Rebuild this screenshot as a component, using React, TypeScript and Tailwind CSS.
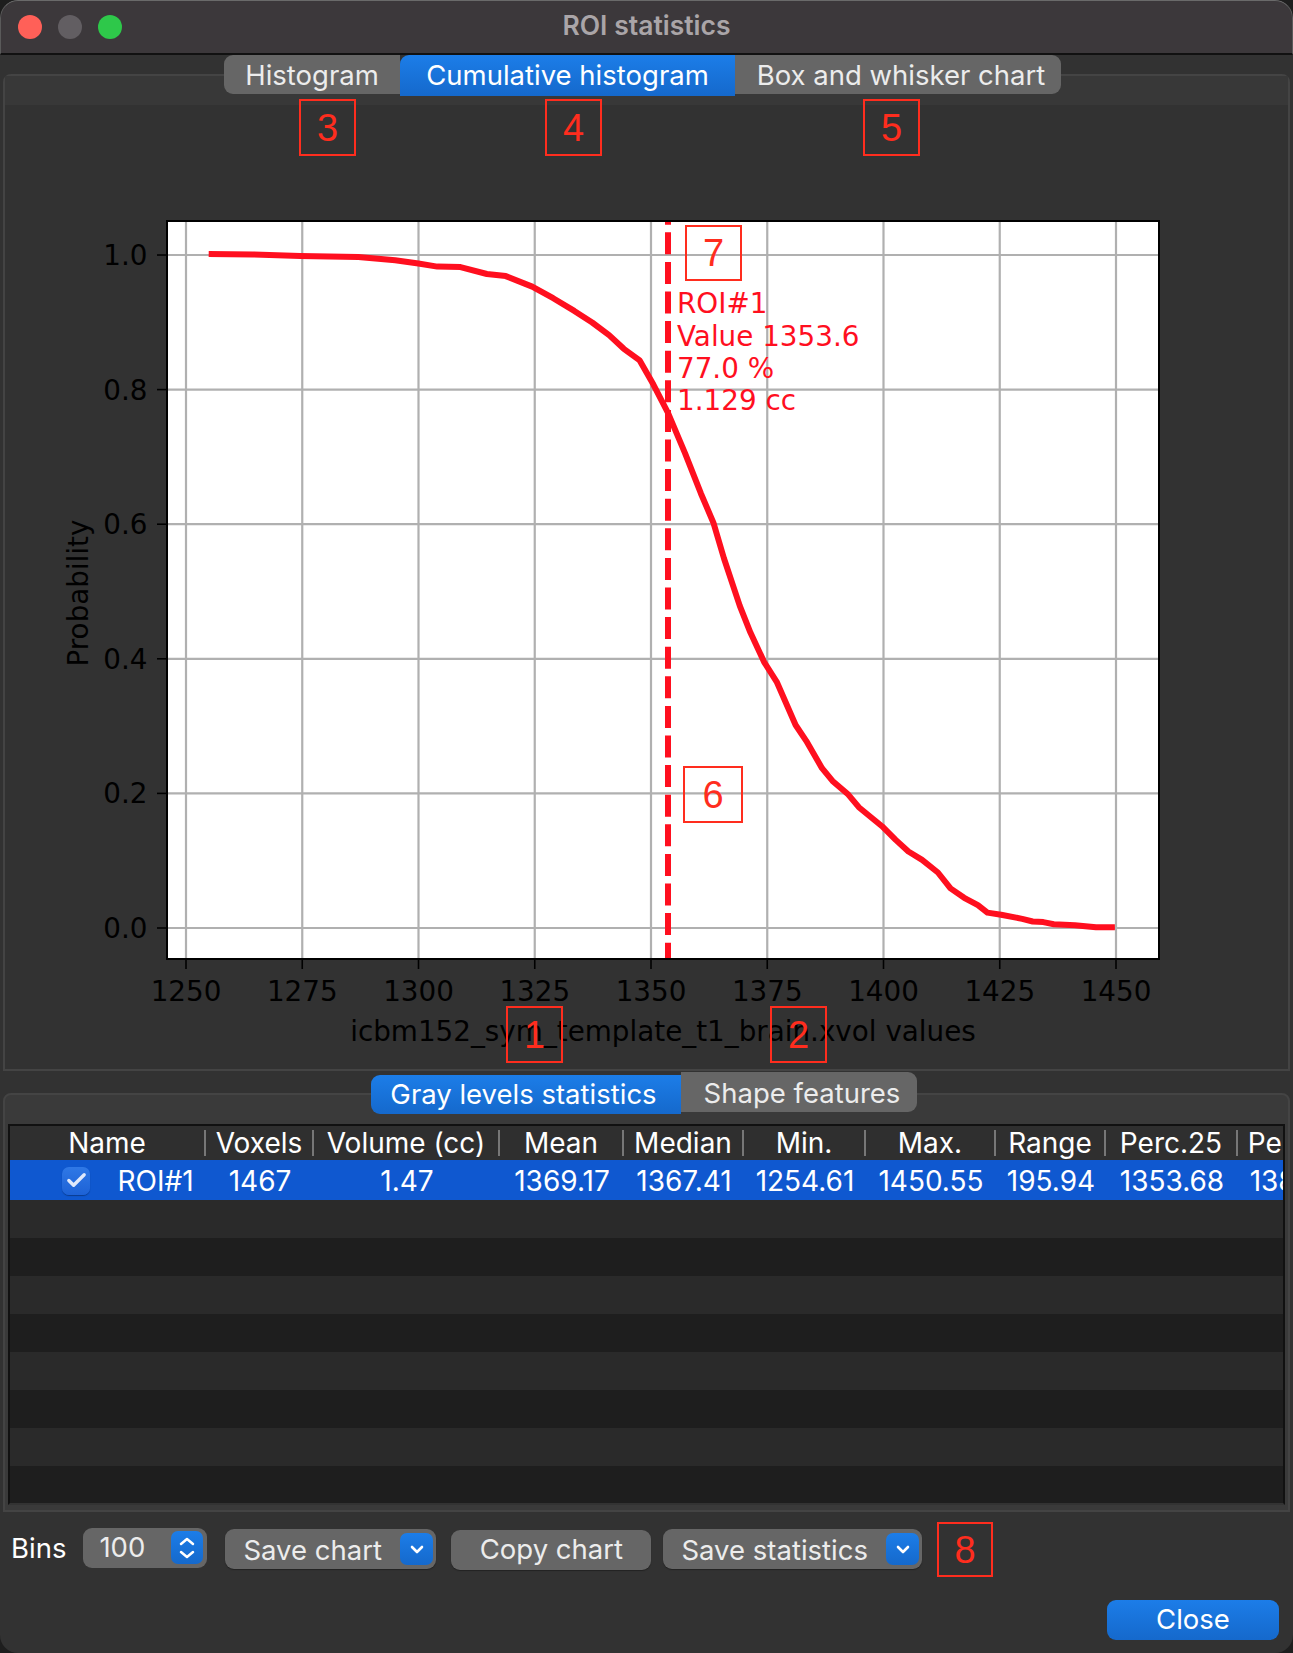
import { Check } from "lucide-react";

// page coordinates: the svg viewBox starts at the page position of the chart area
const curve = [
  [198, 241], [240, 241.5], [285, 243], [340, 244], [375, 247], [397, 250], [415, 253], [437, 253.5],
  [462, 260], [480, 262], [505, 272], [525, 283], [545, 295], [562, 306], [578, 318], [592, 331],
  [607, 342], [620, 365], [634, 392], [650, 430], [665, 468], [677, 496], [687, 530], [702, 575],
  [712, 600], [725, 628], [737, 647], [755, 688], [765, 703], [780, 729], [790, 741], [805, 754],
  [815, 766], [837, 784], [850, 797], [862, 808], [875, 816], [890, 828], [902, 843], [915, 852],
  [928, 859], [937, 866], [950, 868], [970, 872], [980, 874.5], [990, 875], [1000, 877], [1020, 878],
  [1040, 880], [1058, 880],
]
  .map(([x, y]) => `${(x * 1.0538).toFixed(1)},${(y * 1.0538).toFixed(1)}`)
  .join(" ");

const xTicks = [1250, 1275, 1300, 1325, 1350, 1375, 1400, 1425, 1450];
const yTicks = [0, 0.2, 0.4, 0.6, 0.8, 1];

const columns = [
  { name: "Name", width: 196 },
  { name: "Voxels", value: "1467", width: 108 },
  { name: "Volume (cc)", value: "1.47", width: 186 },
  { name: "Mean", value: "1369.17", width: 124 },
  { name: "Median", value: "1367.41", width: 120 },
  { name: "Min.", value: "1254.61", width: 122 },
  { name: "Max.", value: "1450.55", width: 130 },
  { name: "Range", value: "195.94", width: 110 },
  { name: "Perc.25", value: "1353.68", width: 132 },
  { name: "Perc.75", value: "1385.18", width: 120 },
];

const notes = [
  { label: "3", className: "left-[299px] top-[99px] h-[57px] w-[57px]" },
  { label: "4", className: "left-[545px] top-[99px] h-[57px] w-[57px]" },
  { label: "5", className: "left-[863px] top-[99px] h-[57px] w-[57px]" },
  { label: "7", className: "left-[685px] top-[225px] h-[56px] w-[57px]" },
  { label: "6", className: "left-[683px] top-[766px] h-[57px] w-[60px]" },
  { label: "1", className: "left-[506px] top-[1006px] h-[57px] w-[57px]" },
  { label: "2", className: "left-[770px] top-[1006px] h-[57px] w-[57px]" },
  { label: "8", className: "left-[937px] top-[1522px] h-[55px] w-[56px]" },
];

const xPos = (v: number) => 186 + (v - 1250) * 4.65;
const yPos = (p: number) => 928 - p * 673;

function Chart() {
  return (
    <svg viewBox="5 105 1283 960" className="block h-[960px] w-[1283px]">
      <rect x="167" y="221" width="992" height="738" fill="#fff" />
      {xTicks.map((t) => (
        <g key={t}>
          <line x1={xPos(t)} x2={xPos(t)} y1="221" y2="959" stroke="#b0b0b0" strokeWidth="2.2" />
          <line x1={xPos(t)} x2={xPos(t)} y1="959" y2="969" stroke="#000" strokeWidth="1.6" />
          <text x={xPos(t)} y="1001" textAnchor="middle" fontSize="27.8" fontFamily="DejaVu Sans" fill="#000">
            {t}
          </text>
        </g>
      ))}
      {yTicks.map((t) => (
        <g key={t}>
          <line x1="167" x2="1159" y1={yPos(t)} y2={yPos(t)} stroke="#b0b0b0" strokeWidth="2.2" />
          <line x1="157" x2="167" y1={yPos(t)} y2={yPos(t)} stroke="#000" strokeWidth="1.6" />
          <text x="147.5" y={yPos(t) + 10} textAnchor="end" fontSize="27.8" fontFamily="DejaVu Sans" fill="#000">
            {t.toFixed(1)}
          </text>
        </g>
      ))}
      <polyline points={curve} fill="none" stroke="#ff0f1f" strokeWidth="6" strokeLinejoin="round" />
      <line
        x1="668"
        x2="668"
        y1="221"
        y2="959"
        stroke="#ff0f1f"
        strokeWidth="6"
        strokeDasharray="22 7.6"
        strokeDashoffset="18.3"
      />
      <rect x="167" y="221" width="992" height="738" fill="none" stroke="#000" strokeWidth="2" />
      <g fontSize="27.8" fontFamily="DejaVu Sans" fill="#ff0f1f">
        <text x="677" y="313">ROI#1</text>
        <text x="677" y="345.5">Value 1353.6</text>
        <text x="677" y="378">77.0 %</text>
        <text x="677" y="410">1.129 cc</text>
      </g>
      <text x="663" y="1041" textAnchor="middle" fontSize="27.8" fontFamily="DejaVu Sans" fill="#000">
        icbm152_sym_template_t1_brain.xvol values
      </text>
      <text
        transform="translate(88 593) rotate(-90)"
        textAnchor="middle"
        fontSize="27.8"
        fontFamily="DejaVu Sans"
        fill="#000"
      >
        Probability
      </text>
    </svg>
  );
}

function ComboButton({ label, width }: { label: string; width: string }) {
  return (
    <div className={`flex h-10 items-center justify-between rounded-[9px] bg-[#666] pl-[18px] pr-[3px] shadow-[0_1px_1px_#222] ${width}`}>
      <span className="pt-[3px]">{label}</span>
      <span className="flex h-8 w-[33px] items-center justify-center rounded-[7px] bg-gradient-to-b from-[#1c7de8] to-[#1569cc] text-white">
        <svg viewBox="0 0 20 20" className="h-5 w-5" fill="none" stroke="currentColor" strokeWidth="2.6" strokeLinecap="round" strokeLinejoin="round">
          <path d="M5 8l5 5 5-5" />
        </svg>
      </span>
    </div>
  );
}

export default function App() {
  return (
    <div className="h-[1653px] w-[1293px] bg-[#1e1e1e]">
      <div
        className="relative flex h-[1653px] w-[1293px] flex-col overflow-hidden rounded-[18px] bg-[#323232] text-[27.5px] leading-none text-[#ececec]"
        style={{ fontFamily: "Inter, sans-serif" }}
      >
        <div className="relative flex h-[55px] shrink-0 items-center justify-center rounded-t-[18px] border-x border-t border-b-2 border-x-[#5a5a5a] border-t-[#6a6a6a] border-b-[#111] bg-[#3c383b]">
          <div className="absolute left-[17px] flex gap-[16px]">
            <span className="h-6 w-6 rounded-full bg-[#ff6058]" />
            <span className="h-6 w-6 rounded-full bg-[#625e62]" />
            <span className="h-6 w-6 rounded-full bg-[#2ec84a]" />
          </div>
          <span className="pb-[4px] text-[26.5px] font-semibold text-[#aaa5a8]">ROI statistics</span>
        </div>

        <div className="relative z-10 flex h-[39px] shrink-0 justify-center pr-[8px]">
          <div className="flex h-[39px] w-[176px] items-center justify-center rounded-l-[9px] bg-[#666] pt-[2px]">Histogram</div>
          <div className="flex h-[41px] w-[335px] items-center justify-center rounded-tl-[9px] bg-gradient-to-b from-[#1c7de8] to-[#1569cc] text-white">
            Cumulative histogram
          </div>
          <div className="flex h-[39px] w-[326px] items-center justify-center rounded-r-[9px] bg-[#666] pl-[6px] pt-[2px]">Box and whisker chart</div>
        </div>

        <div className="mx-[3px] -mt-[20px] h-[997px] shrink-0 rounded-t-[8px] border-2 border-[#444] bg-[#323232]">
          <div className="h-[29px] bg-[#383838]" />
          <Chart />
        </div>

        <div className="relative z-10 mt-[4px] flex h-[39px] shrink-0 justify-center pr-[5px]">
          <div className="flex h-[39px] w-[310px] items-center justify-center rounded-l-[9px] bg-gradient-to-b from-[#1c7de8] to-[#1569cc] pr-[5px] text-white">
            Gray levels statistics
          </div>
          <div className="-mt-[3px] flex h-[40px] w-[236px] items-center justify-center rounded-r-[9px] bg-[#666] pl-[6px] pt-[3px]">Shape features</div>
        </div>

        <div className="mx-[3px] -mt-[21px] flex h-[419px] shrink-0 flex-col rounded-t-[8px] border-2 border-[#444] bg-[#3a3a3a] px-[3px] pb-[5px] pt-[29px]">
          <div className="flex-1 overflow-hidden border-2 border-[#111] border-b-[#333] bg-[#2a2a2a] text-[28px] text-white">
            <div className="flex h-[34px] bg-[#2f2f2f]">
              {columns.map((col, i) => (
                <div
                  key={col.name}
                  className={`flex shrink-0 items-center justify-center whitespace-nowrap ${i < columns.length - 1 ? "my-[4px] border-r-2 border-[#777]" : ""}`}
                  style={{ width: col.width }}
                >
                  {col.name}
                </div>
              ))}
            </div>
            <div className="flex h-10 bg-[#0f58d0] pt-[1px]">
              {columns.map((col) => (
                <div key={col.name} className="flex shrink-0 items-center justify-center whitespace-nowrap" style={{ width: col.width }}>
                  {col.value ?? (
                    <span className="flex items-center gap-[27px] pl-[40px]">
                      <span className="flex h-[28px] w-[28px] items-center justify-center rounded-[7px] bg-gradient-to-b from-[#2f78e6] to-[#1d62d6] shadow-[0_1px_1px_#0a3c90]">
                        <Check size={23} strokeWidth={3.5} className="text-[#e0e9fb]" />
                      </span>
                      ROI#1
                    </span>
                  )}
                </div>
              ))}
            </div>
            {[0, 1, 2, 3, 4, 5, 6, 7].map((row) => (
              <div key={row} className={row % 2 === 0 ? "h-[38px] bg-[#2a2a2a]" : "h-[38px] bg-[#1e1e1e]"} />
            ))}
          </div>
        </div>

        <div className="flex h-[74px] shrink-0 items-center gap-[18px] pl-[11px]">
          <div className="flex items-center gap-[17px]">
            <span className="text-white">Bins</span>
            <div className="-mt-[3px] flex h-10 w-[124px] items-center justify-between rounded-[9px] bg-[#666] pl-[16px] pr-[4px]">
              <span>100</span>
              <span className="flex h-[33px] w-8 items-center justify-center rounded-[7px] bg-gradient-to-b from-[#1c7de8] to-[#1569cc] text-white">
                <svg viewBox="0 0 20 26" className="h-[26px] w-5" fill="none" stroke="currentColor" strokeWidth="2.5" strokeLinecap="round" strokeLinejoin="round">
                  <path d="M4 9l6-5 6 5M4 17l6 5 6-5" />
                </svg>
              </span>
            </div>
          </div>
          <div className="flex items-center gap-[12px]">
            <ComboButton label="Save chart" width="w-[211px]" />
            <div className="ml-[3px] mt-[1px] flex h-10 w-[200px] items-center justify-center rounded-[9px] bg-[#666] shadow-[0_1px_1px_#222]">Copy chart</div>
            <ComboButton label="Save statistics" width="w-[259px]" />
          </div>
        </div>

        <div className="flex justify-end pr-[14px] pt-[14px]">
          <div className="flex h-10 w-[172px] items-center justify-center rounded-[9px] bg-gradient-to-b from-[#1c7de8] to-[#1569cc] text-white">Close</div>
        </div>

        {notes.map((note) => (
          <div
            key={note.label}
            className={`absolute z-20 flex items-center justify-center border-2 border-[#ff2d1e] text-[38px] font-light text-[#ff2d1e] ${note.className}`}
            style={{ fontFamily: "Liberation Sans, sans-serif" }}
          >
            {note.label}
          </div>
        ))}
      </div>
    </div>
  );
}
